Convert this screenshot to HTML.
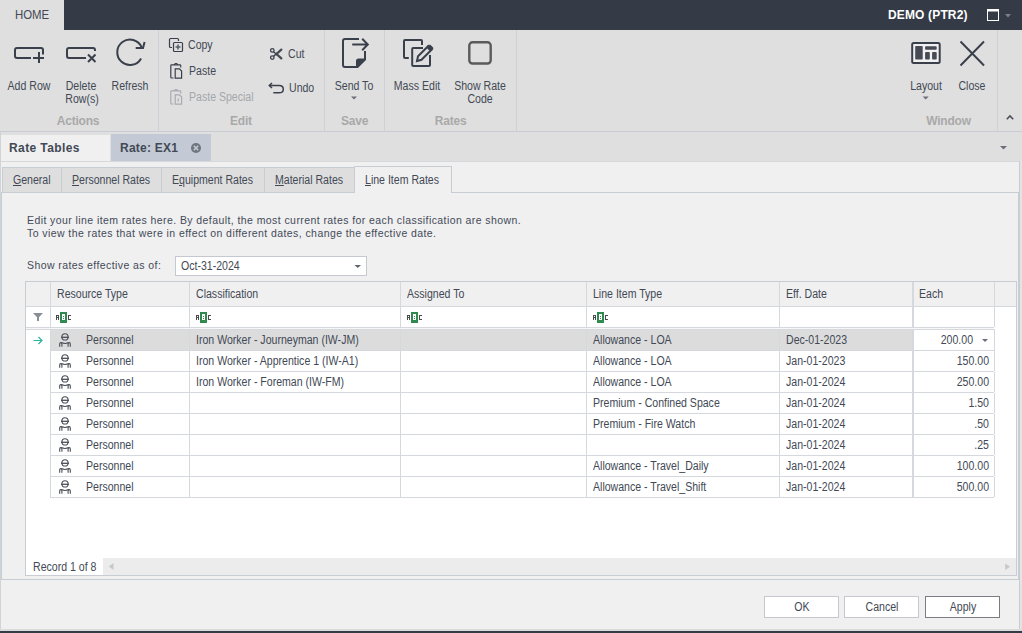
<!DOCTYPE html>
<html><head><meta charset="utf-8">
<style>
*{box-sizing:border-box;margin:0;padding:0}
html,body{width:1022px;height:633px;overflow:hidden;background:#f0f0f0;font-family:"Liberation Sans",sans-serif;color:#3e4551}
.a{position:absolute}
.t{position:absolute;font-size:11px;line-height:13px;white-space:pre}
svg{position:absolute;overflow:visible}
u{text-decoration:underline;text-underline-offset:1px}
</style></head><body>
<div class="a" style="left:0px;top:0px;width:1022px;height:30px;background:#343a46;"></div>
<div class="a" style="left:0px;top:0px;width:64px;height:30px;background:#dfdfdf;"></div>
<div class="t" style="left:15px;top:8px;font-size:12px;line-height:14px;font-weight:400;color:#424955;letter-spacing:0px;transform:scaleX(0.95);transform-origin:left 0;">HOME</div>
<div class="t" style="left:888px;top:8px;font-size:12px;line-height:14px;font-weight:700;color:#ffffff;letter-spacing:0.15px;">DEMO (PTR2)</div>
<svg width="1022" height="633" style="left:0;top:0" viewBox="0 0 1022 633"><rect x="987.5" y="9.5" width="11" height="11" fill="none" stroke="#ffffff" stroke-width="1"/><rect x="987" y="9" width="12" height="2.5" fill="#ffffff"/><path d="M1005,14 H1011 L1008,17.5 Z" fill="#7b808a"/></svg>
<div class="a" style="left:0px;top:30px;width:1022px;height:101px;background:#dfdfdf;"></div>
<div class="a" style="left:0px;top:131px;width:1022px;height:1px;background:#c9ccd3;"></div>
<div class="a" style="left:158px;top:30px;width:1px;height:101px;background:#cfd1d6;"></div>
<div class="a" style="left:324px;top:30px;width:1px;height:101px;background:#cfd1d6;"></div>
<div class="a" style="left:384px;top:30px;width:1px;height:101px;background:#cfd1d6;"></div>
<div class="a" style="left:516px;top:30px;width:1px;height:101px;background:#cfd1d6;"></div>
<div class="a" style="left:997px;top:30px;width:1px;height:101px;background:#cfd1d6;"></div>
<div class="t" style="left:-31.25px;width:120px;text-align:center;top:79px;font-size:12px;line-height:14px;font-weight:400;color:#424955;letter-spacing:0px;transform:scaleX(0.88);transform-origin:center 0;">Add Row</div>
<div class="t" style="left:21.200000000000003px;width:120px;text-align:center;top:79px;font-size:12px;line-height:14px;font-weight:400;color:#424955;letter-spacing:0px;transform:scaleX(0.88);transform-origin:center 0;">Delete</div>
<div class="t" style="left:21.799999999999997px;width:120px;text-align:center;top:92px;font-size:12px;line-height:14px;font-weight:400;color:#424955;letter-spacing:0px;transform:scaleX(0.88);transform-origin:center 0;">Row(s)</div>
<div class="t" style="left:70.19999999999999px;width:120px;text-align:center;top:79px;font-size:12px;line-height:14px;font-weight:400;color:#424955;letter-spacing:0px;transform:scaleX(0.88);transform-origin:center 0;">Refresh</div>
<div class="t" style="left:294.0px;width:120px;text-align:center;top:79px;font-size:12px;line-height:14px;font-weight:400;color:#424955;letter-spacing:0px;transform:scaleX(0.88);transform-origin:center 0;">Send To</div>
<div class="t" style="left:356.9px;width:120px;text-align:center;top:79px;font-size:12px;line-height:14px;font-weight:400;color:#424955;letter-spacing:0px;transform:scaleX(0.88);transform-origin:center 0;">Mass Edit</div>
<div class="t" style="left:420.4px;width:120px;text-align:center;top:79px;font-size:12px;line-height:14px;font-weight:400;color:#424955;letter-spacing:0px;transform:scaleX(0.88);transform-origin:center 0;">Show Rate</div>
<div class="t" style="left:420.4px;width:120px;text-align:center;top:92px;font-size:12px;line-height:14px;font-weight:400;color:#424955;letter-spacing:0px;transform:scaleX(0.88);transform-origin:center 0;">Code</div>
<div class="t" style="left:865.6px;width:120px;text-align:center;top:79px;font-size:12px;line-height:14px;font-weight:400;color:#424955;letter-spacing:0px;transform:scaleX(0.88);transform-origin:center 0;">Layout</div>
<div class="t" style="left:911.5px;width:120px;text-align:center;top:79px;font-size:12px;line-height:14px;font-weight:400;color:#424955;letter-spacing:0px;transform:scaleX(0.88);transform-origin:center 0;">Close</div>
<div class="t" style="left:188px;top:38px;font-size:12px;line-height:14px;font-weight:400;color:#424955;letter-spacing:0px;transform:scaleX(0.88);transform-origin:left 0;">Copy</div>
<div class="t" style="left:189px;top:64px;font-size:12px;line-height:14px;font-weight:400;color:#424955;letter-spacing:0px;transform:scaleX(0.88);transform-origin:left 0;">Paste</div>
<div class="t" style="left:189px;top:90px;font-size:12px;line-height:14px;font-weight:400;color:#a4a7ab;letter-spacing:0px;transform:scaleX(0.88);transform-origin:left 0;">Paste Special</div>
<div class="t" style="left:288px;top:47px;font-size:12px;line-height:14px;font-weight:400;color:#424955;letter-spacing:0px;transform:scaleX(0.88);transform-origin:left 0;">Cut</div>
<div class="t" style="left:289px;top:81px;font-size:12px;line-height:14px;font-weight:400;color:#424955;letter-spacing:0px;transform:scaleX(0.88);transform-origin:left 0;">Undo</div>
<div class="t" style="left:18.0px;width:120px;text-align:center;top:114px;font-size:12px;line-height:14px;font-weight:700;color:#a9a9a9;letter-spacing:-0.2px;">Actions</div>
<div class="t" style="left:180.9px;width:120px;text-align:center;top:114px;font-size:12px;line-height:14px;font-weight:700;color:#a9a9a9;letter-spacing:-0.2px;">Edit</div>
<div class="t" style="left:294.6px;width:120px;text-align:center;top:114px;font-size:12px;line-height:14px;font-weight:700;color:#a9a9a9;letter-spacing:-0.2px;">Save</div>
<div class="t" style="left:390.6px;width:120px;text-align:center;top:114px;font-size:12px;line-height:14px;font-weight:700;color:#a9a9a9;letter-spacing:-0.2px;">Rates</div>
<div class="t" style="left:888.5px;width:120px;text-align:center;top:114px;font-size:12px;line-height:14px;font-weight:700;color:#a9a9a9;letter-spacing:-0.2px;">Window</div>
<svg width="1022" height="633" style="left:0;top:0" viewBox="0 0 1022 633"><g fill="none" stroke="#3a404b" stroke-width="2" stroke-linecap="butt">
<path d="M31,58 H17 Q15,58 15,56 V50 Q15,48 17,48 H41 Q43,48 43,50 V54.5"/>
<path d="M33,58 H44 M39,52 V63"/>
<path d="M86,58 H69 Q67,58 67,56 V50 Q67,48 69,48 H93 Q95,48 95,50 V51"/>
<path d="M88,54.5 L95.5,62 M95.5,54.5 L88,62"/>
<path d="M141.1,58.4 A12.7,12.7 0 1 1 141.6,47.2"/>
<path d="M135.7,48 H143 L144.6,42"/>
</g>
<path d="M351,96.5 H357 L354,99.5 Z" fill="#6a6f78"/>
<path d="M922.7,96.5 H928.7 L925.7,99.5 Z" fill="#6a6f78"/>
<path d="M1006.8,119.2 L1010,116 L1013.2,119.2" fill="none" stroke="#4a505a" stroke-width="1.6"/>
<g fill="none" stroke="#3a404b" stroke-width="1.2">
<path d="M178.5,41 V39.5 Q178.5,38.5 177.5,38.5 H170.5 Q169.5,38.5 169.5,39.5 V46.5 Q169.5,47.5 170.5,47.5 H172"/>
<rect x="173.5" y="42.5" width="9" height="9" rx="1"/>
</g>
<path d="M177.2,44.5 h1.6 v1.7 h1.7 v1.6 h-1.7 v1.7 h-1.6 v-1.7 h-1.7 v-1.6 h1.7 z" fill="#5a6069"/>
<g fill="none" stroke="#3a404b" stroke-width="1.2">
<path d="M173.5,78 H171.5 Q170.8,78 170.8,77.3 V65.5 Q170.8,64.8 171.5,64.8 H180 Q180.7,64.8 180.7,65.5 V67.5"/>
<path d="M175.2,68.8 H179.5 L181.6,71 V78.2 H175.2 Z"/>
<path d="M174,64.8 L175.5,63.6 H176.5 L178,64.8"/>
</g>
<g fill="none" stroke="#a8abb0" stroke-width="1.2">
<path d="M173.5,104 H171.5 Q170.8,104 170.8,103.3 V91.5 Q170.8,90.8 171.5,90.8 H180 Q180.7,90.8 180.7,91.5 V93.5"/>
<path d="M175.2,94.8 H179.5 L181.6,97 V104.2 H175.2 Z"/>
<path d="M174,90.8 L175.5,89.6 H176.5 L178,90.8"/>
<path d="M178.3,98.5 V101.5"/>
</g>

<g fill="none" stroke="#3a404b" stroke-width="1.3">
<circle cx="272.3" cy="50.4" r="1.75"/>
<circle cx="272.3" cy="57.6" r="1.75"/>
<path d="M273.6,51.8 L276,54 L273.6,56.2"/>
</g>
<g stroke="#454b55" stroke-width="2.3" stroke-linecap="round" fill="none"><path d="M276.5,54 L281.3,49.6 M276.5,54 L281.3,58.4"/></g>
<circle cx="276.3" cy="54" r="1.5" fill="#454b55"/>
<g fill="none" stroke="#3a404b" stroke-width="1.5">
<path d="M269.5,85.5 H279 Q283.3,85.5 283.3,89.2 Q283.3,92.8 279,92.8 H273.3"/>
<path d="M272,83 L269.3,85.5 L272,88"/>
</g>
<g fill="none" stroke="#3a404b" stroke-width="2">
<path d="M359,39 H345 Q343,39 343,41 V65 Q343,67 345,67 H357.5 L365,59.5 V51"/>
<path d="M352.2,44.5 H367.5 M362.2,38.8 L367.8,44.5 L362.2,50.2"/>
</g>
<path d="M356,67.5 V61 Q356,58.5 358.5,58.5 H365.5 Z" fill="#3a404b"/>
<g fill="none" stroke="#3a404b" stroke-width="2">
<path d="M422,45 V41 Q422,40 421,40 H405 Q404,40 404,41 V57 Q404,58 405,58 H408.8"/>
<path d="M423,48 H413.2 Q412.2,48 412.2,49 V65 Q412.2,66 413.2,66 H429 Q430,66 430,65 V55"/>
<path d="M417,61 L418,56.3 L428.3,46 L431.8,49.5 L421.5,59.8 Z"/>
</g>
<path d="M426.5,47.8 L429.3,45 Q430,44.3 430.7,45 L433.1,47.4 Q433.8,48.1 433.1,48.8 L430.3,51.6 Z" fill="#3a404b"/>
<rect x="469.3" y="42.3" width="21.4" height="21.2" rx="3.2" fill="none" stroke="#5b5b5b" stroke-width="2.4"/>
<rect x="912.2" y="42.9" width="27.5" height="20" rx="1.5" fill="#f0f0f0" stroke="#3a404b" stroke-width="2"/>
<g fill="#454a55">
<rect x="915.2" y="45.9" width="7.5" height="13.7" rx="0.8"/>
<rect x="925.1" y="46.2" width="11.6" height="3.5" rx="0.8"/>
<rect x="925.1" y="52.1" width="4.7" height="7.5" rx="0.8"/>
<rect x="932.1" y="52.1" width="4.6" height="7.5" rx="0.8"/>
</g>
<path d="M960.5,41.5 L984,65.5 M984,41.5 L960.5,65.5" stroke="#3a404b" stroke-width="2" fill="none"/>
</svg>
<div class="a" style="left:0px;top:132px;width:1022px;height:29px;background:#dfdfdf;"></div>
<div class="a" style="left:1px;top:135px;width:109px;height:26px;background:#f0f0f0;"></div>
<div class="a" style="left:111px;top:134px;width:100px;height:28px;background:#c3cad5;"></div>
<div class="t" style="left:9px;top:141px;font-size:12px;line-height:14px;font-weight:700;color:#424955;letter-spacing:0.4px;">Rate Tables</div>
<div class="t" style="left:120px;top:141px;font-size:12px;line-height:14px;font-weight:700;color:#424955;letter-spacing:0.25px;">Rate: EX1</div>
<svg width="1022" height="633" style="left:0;top:0" viewBox="0 0 1022 633"><circle cx="196" cy="148" r="5" fill="#6f757e"/><path d="M193.8,145.8 L198.2,150.2 M198.2,145.8 L193.8,150.2" stroke="#c3cad5" stroke-width="1.6"/><path d="M1000,146 H1007 L1003.5,149.5 Z" fill="#6a6f78"/></svg>
<div class="a" style="left:0px;top:161px;width:1022px;height:472px;background:#f0f0f0;"></div>
<div class="a" style="left:0px;top:161px;width:1022px;height:1px;background:#d6d8dc;"></div>
<div class="a" style="left:2px;top:167px;width:60px;height:26px;background:#dedede;border:1px solid #c8ccd3"></div>
<div class="a" style="left:61px;top:167px;width:101px;height:26px;background:#dedede;border:1px solid #c8ccd3"></div>
<div class="a" style="left:161px;top:167px;width:104px;height:26px;background:#dedede;border:1px solid #c8ccd3"></div>
<div class="a" style="left:264px;top:167px;width:91px;height:26px;background:#dedede;border:1px solid #c8ccd3"></div>
<div class="a" style="left:354px;top:166px;width:98px;height:27px;background:#f0f0f0;border:1px solid #c8ccd3;border-bottom:none"></div>
<div class="a" style="left:1px;top:192px;width:1018px;height:388px;border:1px solid #c8ccd3;border-top:1px solid #c8ccd3"></div>
<div class="a" style="left:355px;top:192px;width:96px;height:1px;background:#f0f0f0;"></div>
<div class="t" style="left:12.5px;top:173px;font-size:12px;line-height:14px;font-weight:400;color:#424955;letter-spacing:0px;transform:scaleX(0.88);transform-origin:left 0;"><u>G</u>eneral</div>
<div class="t" style="left:72px;top:173px;font-size:12px;line-height:14px;font-weight:400;color:#424955;letter-spacing:0px;transform:scaleX(0.88);transform-origin:left 0;"><u>P</u>ersonnel Rates</div>
<div class="t" style="left:172px;top:173px;font-size:12px;line-height:14px;font-weight:400;color:#424955;letter-spacing:0px;transform:scaleX(0.88);transform-origin:left 0;">E<u>q</u>uipment Rates</div>
<div class="t" style="left:275.3px;top:173px;font-size:12px;line-height:14px;font-weight:400;color:#424955;letter-spacing:0px;transform:scaleX(0.88);transform-origin:left 0;"><u>M</u>aterial Rates</div>
<div class="t" style="left:365px;top:173px;font-size:12px;line-height:14px;font-weight:400;color:#424955;letter-spacing:0px;transform:scaleX(0.88);transform-origin:left 0;"><u>L</u>ine Item Rates</div>
<div class="t" style="left:27px;top:214px;font-size:10.5px;line-height:13px;font-weight:400;color:#434a58;letter-spacing:0.42px;">Edit your line item rates here. By default, the most current rates for each classification are shown.</div>
<div class="t" style="left:27px;top:227px;font-size:10.5px;line-height:13px;font-weight:400;color:#434a58;letter-spacing:0.42px;">To view the rates that were in effect on different dates, change the effective date.</div>
<div class="t" style="left:27px;top:259px;font-size:10.5px;line-height:13px;font-weight:400;color:#434a58;letter-spacing:0.42px;">Show rates effective as of:</div>
<div class="a" style="left:175px;top:256px;width:192px;height:20px;background:#fff;border:1px solid #c5c8ce"></div>
<div class="t" style="left:180.5px;top:259px;font-size:12px;line-height:14px;font-weight:400;color:#424955;letter-spacing:0px;transform:scaleX(0.88);transform-origin:left 0;">Oct-31-2024</div>
<svg width="1022" height="633" style="left:0;top:0" viewBox="0 0 1022 633"><path d="M354.5,265 H361 L357.75,268 Z" fill="#5f646c"/></svg>
<div class="a" style="left:25px;top:281px;width:992px;height:295px;background:#ffffff;border:1px solid #c8ccd3"></div>
<div class="a" style="left:26px;top:282px;width:990px;height:24px;background:#f0f0f0;"></div>
<div class="a" style="left:26px;top:306px;width:990px;height:1px;background:#d5d8dc;"></div>
<div class="a" style="left:50px;top:282px;width:1px;height:24px;background:#d5d8dc;"></div>
<div class="a" style="left:189px;top:282px;width:1px;height:24px;background:#d5d8dc;"></div>
<div class="a" style="left:400px;top:282px;width:1px;height:24px;background:#d5d8dc;"></div>
<div class="a" style="left:586px;top:282px;width:1px;height:24px;background:#d5d8dc;"></div>
<div class="a" style="left:779px;top:282px;width:1px;height:24px;background:#d5d8dc;"></div>
<div class="a" style="left:912px;top:282px;width:1px;height:24px;background:#d5d8dc;"></div>
<div class="a" style="left:913px;top:282px;width:1px;height:24px;background:#d5d8dc;"></div>
<div class="a" style="left:994px;top:282px;width:1px;height:24px;background:#d5d8dc;"></div>
<div class="a" style="left:50px;top:307px;width:1px;height:20px;background:#d5d8dc;"></div>
<div class="a" style="left:189px;top:307px;width:1px;height:20px;background:#d5d8dc;"></div>
<div class="a" style="left:400px;top:307px;width:1px;height:20px;background:#d5d8dc;"></div>
<div class="a" style="left:586px;top:307px;width:1px;height:20px;background:#d5d8dc;"></div>
<div class="a" style="left:779px;top:307px;width:1px;height:20px;background:#d5d8dc;"></div>
<div class="a" style="left:912px;top:307px;width:1px;height:20px;background:#d5d8dc;"></div>
<div class="a" style="left:913px;top:307px;width:1px;height:20px;background:#d5d8dc;"></div>
<div class="a" style="left:994px;top:307px;width:1px;height:20px;background:#d5d8dc;"></div>
<div class="a" style="left:26px;top:327px;width:968px;height:1px;background:#d5d8dc;"></div>
<div class="a" style="left:26px;top:329px;width:968px;height:1px;background:#d5d8dc;"></div>
<div class="a" style="left:26px;top:328px;width:968px;height:1px;background:#f7f7f7;"></div>
<div class="t" style="left:57px;top:287px;font-size:12px;line-height:14px;font-weight:400;color:#424955;letter-spacing:0px;transform:scaleX(0.88);transform-origin:left 0;">Resource Type</div>
<div class="t" style="left:196px;top:287px;font-size:12px;line-height:14px;font-weight:400;color:#424955;letter-spacing:0px;transform:scaleX(0.88);transform-origin:left 0;">Classification</div>
<div class="t" style="left:407px;top:287px;font-size:12px;line-height:14px;font-weight:400;color:#424955;letter-spacing:0px;transform:scaleX(0.88);transform-origin:left 0;">Assigned To</div>
<div class="t" style="left:593px;top:287px;font-size:12px;line-height:14px;font-weight:400;color:#424955;letter-spacing:0px;transform:scaleX(0.88);transform-origin:left 0;">Line Item Type</div>
<div class="t" style="left:786px;top:287px;font-size:12px;line-height:14px;font-weight:400;color:#424955;letter-spacing:0px;transform:scaleX(0.88);transform-origin:left 0;">Eff. Date</div>
<div class="t" style="left:919px;top:287px;font-size:12px;line-height:14px;font-weight:400;color:#424955;letter-spacing:0px;transform:scaleX(0.88);transform-origin:left 0;">Each</div>
<svg width="1022" height="633" style="left:0;top:0" viewBox="0 0 1022 633"><path d="M33,313 H43 L39,317.3 V321 H37 V317.3 Z" fill="#8a8f96"/><g transform="translate(0,0)" shape-rendering="crispEdges">
<path d="M56,315h3v1h-3z M56,316h1v4h-1z M58,316h1v4h-1z M57,317h1v1h-1z" fill="#4b4b4b"/>
<rect x="60" y="312" width="7" height="11" fill="#2f8a50"/>
<rect x="62" y="314" width="3" height="6" fill="#ffffff"/>
<rect x="63" y="316" width="1" height="1" fill="#2f8a50"/><rect x="63" y="318" width="1" height="1" fill="#2f8a50"/>
<path d="M68,315h3v1h-3z M68,316h1v3h-1z M68,319h3v1h-3z" fill="#4b4b4b"/>
</g><g transform="translate(140,0)" shape-rendering="crispEdges">
<path d="M56,315h3v1h-3z M56,316h1v4h-1z M58,316h1v4h-1z M57,317h1v1h-1z" fill="#4b4b4b"/>
<rect x="60" y="312" width="7" height="11" fill="#2f8a50"/>
<rect x="62" y="314" width="3" height="6" fill="#ffffff"/>
<rect x="63" y="316" width="1" height="1" fill="#2f8a50"/><rect x="63" y="318" width="1" height="1" fill="#2f8a50"/>
<path d="M68,315h3v1h-3z M68,316h1v3h-1z M68,319h3v1h-3z" fill="#4b4b4b"/>
</g><g transform="translate(351,0)" shape-rendering="crispEdges">
<path d="M56,315h3v1h-3z M56,316h1v4h-1z M58,316h1v4h-1z M57,317h1v1h-1z" fill="#4b4b4b"/>
<rect x="60" y="312" width="7" height="11" fill="#2f8a50"/>
<rect x="62" y="314" width="3" height="6" fill="#ffffff"/>
<rect x="63" y="316" width="1" height="1" fill="#2f8a50"/><rect x="63" y="318" width="1" height="1" fill="#2f8a50"/>
<path d="M68,315h3v1h-3z M68,316h1v3h-1z M68,319h3v1h-3z" fill="#4b4b4b"/>
</g><g transform="translate(537,0)" shape-rendering="crispEdges">
<path d="M56,315h3v1h-3z M56,316h1v4h-1z M58,316h1v4h-1z M57,317h1v1h-1z" fill="#4b4b4b"/>
<rect x="60" y="312" width="7" height="11" fill="#2f8a50"/>
<rect x="62" y="314" width="3" height="6" fill="#ffffff"/>
<rect x="63" y="316" width="1" height="1" fill="#2f8a50"/><rect x="63" y="318" width="1" height="1" fill="#2f8a50"/>
<path d="M68,315h3v1h-3z M68,316h1v3h-1z M68,319h3v1h-3z" fill="#4b4b4b"/>
</g></svg>
<div class="a" style="left:51px;top:330px;width:861px;height:20px;background:#dcdcdc;"></div>
<div class="a" style="left:50px;top:350px;width:944px;height:1px;background:#d5d8dc;"></div>
<div class="a" style="left:50px;top:330px;width:1px;height:20px;background:#d5d8dc;"></div>
<div class="a" style="left:189px;top:330px;width:1px;height:20px;background:#d5d8dc;"></div>
<div class="a" style="left:400px;top:330px;width:1px;height:20px;background:#d5d8dc;"></div>
<div class="a" style="left:586px;top:330px;width:1px;height:20px;background:#d5d8dc;"></div>
<div class="a" style="left:779px;top:330px;width:1px;height:20px;background:#d5d8dc;"></div>
<div class="a" style="left:912px;top:330px;width:1px;height:20px;background:#d5d8dc;"></div>
<div class="a" style="left:913px;top:330px;width:1px;height:20px;background:#d5d8dc;"></div>
<div class="a" style="left:994px;top:330px;width:1px;height:20px;background:#d5d8dc;"></div>
<div class="t" style="left:86px;top:333px;font-size:12px;line-height:14px;font-weight:400;color:#424955;letter-spacing:0px;transform:scaleX(0.88);transform-origin:left 0;">Personnel</div>
<div class="t" style="left:196px;top:333px;font-size:12px;line-height:14px;font-weight:400;color:#424955;letter-spacing:0px;transform:scaleX(0.88);transform-origin:left 0;">Iron Worker - Journeyman (IW-JM)</div>
<div class="t" style="left:593px;top:333px;font-size:12px;line-height:14px;font-weight:400;color:#424955;letter-spacing:0px;transform:scaleX(0.88);transform-origin:left 0;">Allowance - LOA</div>
<div class="t" style="left:786px;top:333px;font-size:12px;line-height:14px;font-weight:400;color:#424955;letter-spacing:0px;transform:scaleX(0.88);transform-origin:left 0;">Dec-01-2023</div>
<div class="a" style="left:913px;top:329px;width:82px;height:22px;background:#fff;border:1px solid #d5d8dc"></div>
<div class="t" style="left:772.5px;width:200px;text-align:right;top:333px;font-size:12px;line-height:14px;font-weight:400;color:#424955;letter-spacing:0px;transform:scaleX(0.88);transform-origin:right 0;">200.00</div>
<div class="a" style="left:50px;top:371px;width:944px;height:1px;background:#d5d8dc;"></div>
<div class="a" style="left:50px;top:351px;width:1px;height:20px;background:#d5d8dc;"></div>
<div class="a" style="left:189px;top:351px;width:1px;height:20px;background:#d5d8dc;"></div>
<div class="a" style="left:400px;top:351px;width:1px;height:20px;background:#d5d8dc;"></div>
<div class="a" style="left:586px;top:351px;width:1px;height:20px;background:#d5d8dc;"></div>
<div class="a" style="left:779px;top:351px;width:1px;height:20px;background:#d5d8dc;"></div>
<div class="a" style="left:912px;top:351px;width:1px;height:20px;background:#d5d8dc;"></div>
<div class="a" style="left:913px;top:351px;width:1px;height:20px;background:#d5d8dc;"></div>
<div class="a" style="left:994px;top:351px;width:1px;height:20px;background:#d5d8dc;"></div>
<div class="t" style="left:86px;top:354px;font-size:12px;line-height:14px;font-weight:400;color:#424955;letter-spacing:0px;transform:scaleX(0.88);transform-origin:left 0;">Personnel</div>
<div class="t" style="left:196px;top:354px;font-size:12px;line-height:14px;font-weight:400;color:#424955;letter-spacing:0px;transform:scaleX(0.88);transform-origin:left 0;">Iron Worker - Apprentice 1 (IW-A1)</div>
<div class="t" style="left:593px;top:354px;font-size:12px;line-height:14px;font-weight:400;color:#424955;letter-spacing:0px;transform:scaleX(0.88);transform-origin:left 0;">Allowance - LOA</div>
<div class="t" style="left:786px;top:354px;font-size:12px;line-height:14px;font-weight:400;color:#424955;letter-spacing:0px;transform:scaleX(0.88);transform-origin:left 0;">Jan-01-2023</div>
<div class="t" style="left:789px;width:200px;text-align:right;top:354px;font-size:12px;line-height:14px;font-weight:400;color:#424955;letter-spacing:0px;transform:scaleX(0.88);transform-origin:right 0;">150.00</div>
<div class="a" style="left:50px;top:392px;width:944px;height:1px;background:#d5d8dc;"></div>
<div class="a" style="left:50px;top:372px;width:1px;height:20px;background:#d5d8dc;"></div>
<div class="a" style="left:189px;top:372px;width:1px;height:20px;background:#d5d8dc;"></div>
<div class="a" style="left:400px;top:372px;width:1px;height:20px;background:#d5d8dc;"></div>
<div class="a" style="left:586px;top:372px;width:1px;height:20px;background:#d5d8dc;"></div>
<div class="a" style="left:779px;top:372px;width:1px;height:20px;background:#d5d8dc;"></div>
<div class="a" style="left:912px;top:372px;width:1px;height:20px;background:#d5d8dc;"></div>
<div class="a" style="left:913px;top:372px;width:1px;height:20px;background:#d5d8dc;"></div>
<div class="a" style="left:994px;top:372px;width:1px;height:20px;background:#d5d8dc;"></div>
<div class="t" style="left:86px;top:375px;font-size:12px;line-height:14px;font-weight:400;color:#424955;letter-spacing:0px;transform:scaleX(0.88);transform-origin:left 0;">Personnel</div>
<div class="t" style="left:196px;top:375px;font-size:12px;line-height:14px;font-weight:400;color:#424955;letter-spacing:0px;transform:scaleX(0.88);transform-origin:left 0;">Iron Worker - Foreman (IW-FM)</div>
<div class="t" style="left:593px;top:375px;font-size:12px;line-height:14px;font-weight:400;color:#424955;letter-spacing:0px;transform:scaleX(0.88);transform-origin:left 0;">Allowance - LOA</div>
<div class="t" style="left:786px;top:375px;font-size:12px;line-height:14px;font-weight:400;color:#424955;letter-spacing:0px;transform:scaleX(0.88);transform-origin:left 0;">Jan-01-2024</div>
<div class="t" style="left:789px;width:200px;text-align:right;top:375px;font-size:12px;line-height:14px;font-weight:400;color:#424955;letter-spacing:0px;transform:scaleX(0.88);transform-origin:right 0;">250.00</div>
<div class="a" style="left:50px;top:413px;width:944px;height:1px;background:#d5d8dc;"></div>
<div class="a" style="left:50px;top:393px;width:1px;height:20px;background:#d5d8dc;"></div>
<div class="a" style="left:189px;top:393px;width:1px;height:20px;background:#d5d8dc;"></div>
<div class="a" style="left:400px;top:393px;width:1px;height:20px;background:#d5d8dc;"></div>
<div class="a" style="left:586px;top:393px;width:1px;height:20px;background:#d5d8dc;"></div>
<div class="a" style="left:779px;top:393px;width:1px;height:20px;background:#d5d8dc;"></div>
<div class="a" style="left:912px;top:393px;width:1px;height:20px;background:#d5d8dc;"></div>
<div class="a" style="left:913px;top:393px;width:1px;height:20px;background:#d5d8dc;"></div>
<div class="a" style="left:994px;top:393px;width:1px;height:20px;background:#d5d8dc;"></div>
<div class="t" style="left:86px;top:396px;font-size:12px;line-height:14px;font-weight:400;color:#424955;letter-spacing:0px;transform:scaleX(0.88);transform-origin:left 0;">Personnel</div>
<div class="t" style="left:593px;top:396px;font-size:12px;line-height:14px;font-weight:400;color:#424955;letter-spacing:0px;transform:scaleX(0.88);transform-origin:left 0;">Premium - Confined Space</div>
<div class="t" style="left:786px;top:396px;font-size:12px;line-height:14px;font-weight:400;color:#424955;letter-spacing:0px;transform:scaleX(0.88);transform-origin:left 0;">Jan-01-2024</div>
<div class="t" style="left:789px;width:200px;text-align:right;top:396px;font-size:12px;line-height:14px;font-weight:400;color:#424955;letter-spacing:0px;transform:scaleX(0.88);transform-origin:right 0;">1.50</div>
<div class="a" style="left:50px;top:434px;width:944px;height:1px;background:#d5d8dc;"></div>
<div class="a" style="left:50px;top:414px;width:1px;height:20px;background:#d5d8dc;"></div>
<div class="a" style="left:189px;top:414px;width:1px;height:20px;background:#d5d8dc;"></div>
<div class="a" style="left:400px;top:414px;width:1px;height:20px;background:#d5d8dc;"></div>
<div class="a" style="left:586px;top:414px;width:1px;height:20px;background:#d5d8dc;"></div>
<div class="a" style="left:779px;top:414px;width:1px;height:20px;background:#d5d8dc;"></div>
<div class="a" style="left:912px;top:414px;width:1px;height:20px;background:#d5d8dc;"></div>
<div class="a" style="left:913px;top:414px;width:1px;height:20px;background:#d5d8dc;"></div>
<div class="a" style="left:994px;top:414px;width:1px;height:20px;background:#d5d8dc;"></div>
<div class="t" style="left:86px;top:417px;font-size:12px;line-height:14px;font-weight:400;color:#424955;letter-spacing:0px;transform:scaleX(0.88);transform-origin:left 0;">Personnel</div>
<div class="t" style="left:593px;top:417px;font-size:12px;line-height:14px;font-weight:400;color:#424955;letter-spacing:0px;transform:scaleX(0.88);transform-origin:left 0;">Premium - Fire Watch</div>
<div class="t" style="left:786px;top:417px;font-size:12px;line-height:14px;font-weight:400;color:#424955;letter-spacing:0px;transform:scaleX(0.88);transform-origin:left 0;">Jan-01-2024</div>
<div class="t" style="left:789px;width:200px;text-align:right;top:417px;font-size:12px;line-height:14px;font-weight:400;color:#424955;letter-spacing:0px;transform:scaleX(0.88);transform-origin:right 0;">.50</div>
<div class="a" style="left:50px;top:455px;width:944px;height:1px;background:#d5d8dc;"></div>
<div class="a" style="left:50px;top:435px;width:1px;height:20px;background:#d5d8dc;"></div>
<div class="a" style="left:189px;top:435px;width:1px;height:20px;background:#d5d8dc;"></div>
<div class="a" style="left:400px;top:435px;width:1px;height:20px;background:#d5d8dc;"></div>
<div class="a" style="left:586px;top:435px;width:1px;height:20px;background:#d5d8dc;"></div>
<div class="a" style="left:779px;top:435px;width:1px;height:20px;background:#d5d8dc;"></div>
<div class="a" style="left:912px;top:435px;width:1px;height:20px;background:#d5d8dc;"></div>
<div class="a" style="left:913px;top:435px;width:1px;height:20px;background:#d5d8dc;"></div>
<div class="a" style="left:994px;top:435px;width:1px;height:20px;background:#d5d8dc;"></div>
<div class="t" style="left:86px;top:438px;font-size:12px;line-height:14px;font-weight:400;color:#424955;letter-spacing:0px;transform:scaleX(0.88);transform-origin:left 0;">Personnel</div>
<div class="t" style="left:786px;top:438px;font-size:12px;line-height:14px;font-weight:400;color:#424955;letter-spacing:0px;transform:scaleX(0.88);transform-origin:left 0;">Jan-01-2024</div>
<div class="t" style="left:789px;width:200px;text-align:right;top:438px;font-size:12px;line-height:14px;font-weight:400;color:#424955;letter-spacing:0px;transform:scaleX(0.88);transform-origin:right 0;">.25</div>
<div class="a" style="left:50px;top:476px;width:944px;height:1px;background:#d5d8dc;"></div>
<div class="a" style="left:50px;top:456px;width:1px;height:20px;background:#d5d8dc;"></div>
<div class="a" style="left:189px;top:456px;width:1px;height:20px;background:#d5d8dc;"></div>
<div class="a" style="left:400px;top:456px;width:1px;height:20px;background:#d5d8dc;"></div>
<div class="a" style="left:586px;top:456px;width:1px;height:20px;background:#d5d8dc;"></div>
<div class="a" style="left:779px;top:456px;width:1px;height:20px;background:#d5d8dc;"></div>
<div class="a" style="left:912px;top:456px;width:1px;height:20px;background:#d5d8dc;"></div>
<div class="a" style="left:913px;top:456px;width:1px;height:20px;background:#d5d8dc;"></div>
<div class="a" style="left:994px;top:456px;width:1px;height:20px;background:#d5d8dc;"></div>
<div class="t" style="left:86px;top:459px;font-size:12px;line-height:14px;font-weight:400;color:#424955;letter-spacing:0px;transform:scaleX(0.88);transform-origin:left 0;">Personnel</div>
<div class="t" style="left:593px;top:459px;font-size:12px;line-height:14px;font-weight:400;color:#424955;letter-spacing:0px;transform:scaleX(0.88);transform-origin:left 0;">Allowance - Travel_Daily</div>
<div class="t" style="left:786px;top:459px;font-size:12px;line-height:14px;font-weight:400;color:#424955;letter-spacing:0px;transform:scaleX(0.88);transform-origin:left 0;">Jan-01-2024</div>
<div class="t" style="left:789px;width:200px;text-align:right;top:459px;font-size:12px;line-height:14px;font-weight:400;color:#424955;letter-spacing:0px;transform:scaleX(0.88);transform-origin:right 0;">100.00</div>
<div class="a" style="left:50px;top:497px;width:944px;height:1px;background:#d5d8dc;"></div>
<div class="a" style="left:50px;top:477px;width:1px;height:20px;background:#d5d8dc;"></div>
<div class="a" style="left:189px;top:477px;width:1px;height:20px;background:#d5d8dc;"></div>
<div class="a" style="left:400px;top:477px;width:1px;height:20px;background:#d5d8dc;"></div>
<div class="a" style="left:586px;top:477px;width:1px;height:20px;background:#d5d8dc;"></div>
<div class="a" style="left:779px;top:477px;width:1px;height:20px;background:#d5d8dc;"></div>
<div class="a" style="left:912px;top:477px;width:1px;height:20px;background:#d5d8dc;"></div>
<div class="a" style="left:913px;top:477px;width:1px;height:20px;background:#d5d8dc;"></div>
<div class="a" style="left:994px;top:477px;width:1px;height:20px;background:#d5d8dc;"></div>
<div class="t" style="left:86px;top:480px;font-size:12px;line-height:14px;font-weight:400;color:#424955;letter-spacing:0px;transform:scaleX(0.88);transform-origin:left 0;">Personnel</div>
<div class="t" style="left:593px;top:480px;font-size:12px;line-height:14px;font-weight:400;color:#424955;letter-spacing:0px;transform:scaleX(0.88);transform-origin:left 0;">Allowance - Travel_Shift</div>
<div class="t" style="left:786px;top:480px;font-size:12px;line-height:14px;font-weight:400;color:#424955;letter-spacing:0px;transform:scaleX(0.88);transform-origin:left 0;">Jan-01-2024</div>
<div class="t" style="left:789px;width:200px;text-align:right;top:480px;font-size:12px;line-height:14px;font-weight:400;color:#424955;letter-spacing:0px;transform:scaleX(0.88);transform-origin:right 0;">500.00</div>
<svg width="1022" height="633" style="left:0;top:0" viewBox="0 0 1022 633"><path d="M982,339 H988 L985,342 Z" fill="#6a6f78"/><g fill="none" stroke="#4a4f58" stroke-width="1.1">
<circle cx="65" cy="336.9" r="3.1"/>
<path d="M61,337.3 H69" stroke-width="1.3"/>
<path d="M59.7,346.8 V344 Q59.7,342.6 60.8,342.6 Q61.9,342.6 61.9,344 V346.8"/>
<path d="M68.1,346.8 V344 Q68.1,342.6 69.2,342.6 Q70.3,342.6 70.3,344 V346.8"/>
<path d="M61.2,342.6 Q65,344.3 68.8,342.6"/>
</g><g fill="none" stroke="#4a4f58" stroke-width="1.1">
<circle cx="65" cy="357.9" r="3.1"/>
<path d="M61,358.3 H69" stroke-width="1.3"/>
<path d="M59.7,367.8 V365 Q59.7,363.6 60.8,363.6 Q61.9,363.6 61.9,365 V367.8"/>
<path d="M68.1,367.8 V365 Q68.1,363.6 69.2,363.6 Q70.3,363.6 70.3,365 V367.8"/>
<path d="M61.2,363.6 Q65,365.3 68.8,363.6"/>
</g><g fill="none" stroke="#4a4f58" stroke-width="1.1">
<circle cx="65" cy="378.9" r="3.1"/>
<path d="M61,379.3 H69" stroke-width="1.3"/>
<path d="M59.7,388.8 V386 Q59.7,384.6 60.8,384.6 Q61.9,384.6 61.9,386 V388.8"/>
<path d="M68.1,388.8 V386 Q68.1,384.6 69.2,384.6 Q70.3,384.6 70.3,386 V388.8"/>
<path d="M61.2,384.6 Q65,386.3 68.8,384.6"/>
</g><g fill="none" stroke="#4a4f58" stroke-width="1.1">
<circle cx="65" cy="399.9" r="3.1"/>
<path d="M61,400.3 H69" stroke-width="1.3"/>
<path d="M59.7,409.8 V407 Q59.7,405.6 60.8,405.6 Q61.9,405.6 61.9,407 V409.8"/>
<path d="M68.1,409.8 V407 Q68.1,405.6 69.2,405.6 Q70.3,405.6 70.3,407 V409.8"/>
<path d="M61.2,405.6 Q65,407.3 68.8,405.6"/>
</g><g fill="none" stroke="#4a4f58" stroke-width="1.1">
<circle cx="65" cy="420.9" r="3.1"/>
<path d="M61,421.3 H69" stroke-width="1.3"/>
<path d="M59.7,430.8 V428 Q59.7,426.6 60.8,426.6 Q61.9,426.6 61.9,428 V430.8"/>
<path d="M68.1,430.8 V428 Q68.1,426.6 69.2,426.6 Q70.3,426.6 70.3,428 V430.8"/>
<path d="M61.2,426.6 Q65,428.3 68.8,426.6"/>
</g><g fill="none" stroke="#4a4f58" stroke-width="1.1">
<circle cx="65" cy="441.9" r="3.1"/>
<path d="M61,442.3 H69" stroke-width="1.3"/>
<path d="M59.7,451.8 V449 Q59.7,447.6 60.8,447.6 Q61.9,447.6 61.9,449 V451.8"/>
<path d="M68.1,451.8 V449 Q68.1,447.6 69.2,447.6 Q70.3,447.6 70.3,449 V451.8"/>
<path d="M61.2,447.6 Q65,449.3 68.8,447.6"/>
</g><g fill="none" stroke="#4a4f58" stroke-width="1.1">
<circle cx="65" cy="462.9" r="3.1"/>
<path d="M61,463.3 H69" stroke-width="1.3"/>
<path d="M59.7,472.8 V470 Q59.7,468.6 60.8,468.6 Q61.9,468.6 61.9,470 V472.8"/>
<path d="M68.1,472.8 V470 Q68.1,468.6 69.2,468.6 Q70.3,468.6 70.3,470 V472.8"/>
<path d="M61.2,468.6 Q65,470.3 68.8,468.6"/>
</g><g fill="none" stroke="#4a4f58" stroke-width="1.1">
<circle cx="65" cy="483.9" r="3.1"/>
<path d="M61,484.3 H69" stroke-width="1.3"/>
<path d="M59.7,493.8 V491 Q59.7,489.6 60.8,489.6 Q61.9,489.6 61.9,491 V493.8"/>
<path d="M68.1,493.8 V491 Q68.1,489.6 69.2,489.6 Q70.3,489.6 70.3,491 V493.8"/>
<path d="M61.2,489.6 Q65,491.3 68.8,489.6"/>
</g><path d="M33.5,340.5 H42 M38.5,337 L42,340.5 L38.5,344" fill="none" stroke="#2cb5a0" stroke-width="1.2"/></svg>
<div class="a" style="left:103px;top:558px;width:913px;height:17px;background:#ececec;"></div>
<div class="t" style="left:32.6px;top:560px;font-size:12px;line-height:14px;font-weight:400;color:#424955;letter-spacing:0px;transform:scaleX(0.88);transform-origin:left 0;">Record 1 of 8</div>
<svg width="1022" height="633" style="left:0;top:0" viewBox="0 0 1022 633"><path d="M113.5,563 V570 L108.8,566.5 Z" fill="#c5c8cc"/><path d="M1005.2,563.5 V570 L1010,566.75 Z" fill="#c5c8cc"/></svg>
<div class="a" style="left:764px;top:596px;width:75px;height:22px;background:#ffffff;border:1px solid #c5c8ce"></div>
<div class="t" style="left:741.5px;width:120px;text-align:center;top:600px;font-size:12px;line-height:14px;font-weight:400;color:#424955;letter-spacing:0px;transform:scaleX(0.88);transform-origin:center 0;">OK</div>
<div class="a" style="left:844px;top:596px;width:75px;height:22px;background:#ffffff;border:1px solid #c5c8ce"></div>
<div class="t" style="left:821.5px;width:120px;text-align:center;top:600px;font-size:12px;line-height:14px;font-weight:400;color:#424955;letter-spacing:0px;transform:scaleX(0.88);transform-origin:center 0;">Cancel</div>
<div class="a" style="left:925px;top:596px;width:75px;height:22px;background:#ffffff;border:1px solid #7a7d82"></div>
<div class="t" style="left:902.5px;width:120px;text-align:center;top:600px;font-size:12px;line-height:14px;font-weight:400;color:#424955;letter-spacing:0px;transform:scaleX(0.88);transform-origin:center 0;">Apply</div>
<div class="a" style="left:0px;top:629px;width:1022px;height:2px;background:#dcdcdc;"></div>
<div class="a" style="left:0px;top:631px;width:1022px;height:2px;background:#343a46;"></div>
<div class="a" style="left:1019px;top:161px;width:1px;height:468px;background:#c8ccd3;"></div>
<div class="a" style="left:1020px;top:161px;width:2px;height:468px;background:#e4e4e4;"></div>
<div class="a" style="left:0px;top:132px;width:1px;height:497px;background:#d0d3d7;"></div>
</body></html>
